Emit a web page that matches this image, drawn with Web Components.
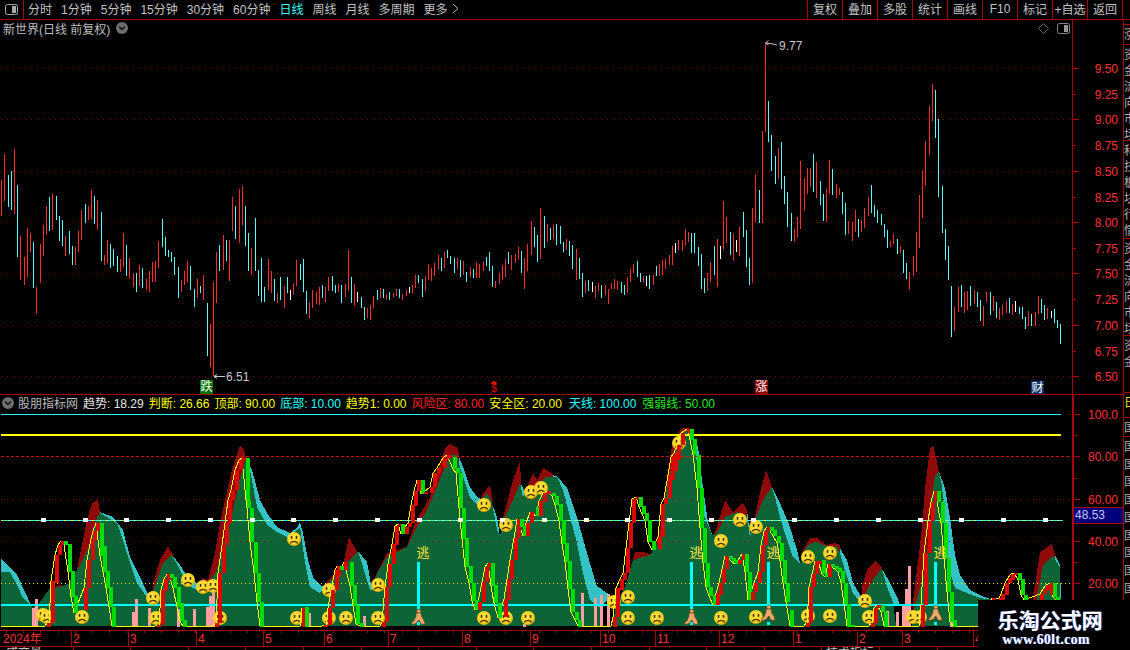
<!DOCTYPE html>
<html lang="zh">
<head>
<meta charset="utf-8">
<title>股朋指标网</title>
<style>
    html, body { margin: 0; background: #000; }
    body { width: 1130px; height: 650px; overflow: hidden; font: 12px "Liberation Sans", "Noto Sans CJK SC", sans-serif; color: #bdbdbd; }
</style>
</head>
<body>
<stock-app></stock-app>
<script>
const LINE = '#a80808';

// page x/y read off the reference, zoomed 3x: "zx,top,bottom,colour"
const CANDLE_RUNS = [
    { ox: 0, oy: 130, data: '4,150,258,r 13,72,212,r 25,135,232,c 34,123,240,c 43,57,252,r 52,165,380,c 61,318,450,r 73,381,465,r 82,294,441,r 91,309,366,r 100,336,474,c 109,471,552,r 121,342,459,r 130,285,378,r 139,228,315,r 148,201,303,c 157,192,300,r 169,198,270,c 178,258,333,c 187,270,348,c 196,318,378,r 208,303,372,c 217,348,405,c 226,351,405,r 235,303,366,r 244,240,330,r 256,222,279,c 265,228,270,r 274,180,267,r 283,198,282,c 292,210,297,r 304,246,393,c 313,375,405,r 322,330,399,r 331,342,414,c 340,357,408,c 352,378,426,c 361,387,426,r 370,309,411,r 379,345,438,c 388,384,447,r 400,429,471,r 409,429,486,c 418,405,468,r 427,414,474,c 439,447,480,r 448,423,486,r 457,396,456,r 466,393,456,r 475,333,414,r 487,267,351,c 496,321,378,c 505,360,381,c 514,366,396,c 523,381,435,c 535,411,504,c 544,450,486,r 553,423,465,r 562,393,456,r 571,408,480,c 583,477,531,c 592,447,504,r 601,468,489,c 610,435,510,r 622,519,678,c 631,582,711,r 640,456,738,r 649,366,519,r 658,345,423,c 670,315,420,r 679,330,393,c 688,330,453,r 697,201,303,r 706,228,327,c 718,177,339,r 727,168,285,r 736,228,348,c 745,309,423,c 754,354,435,r 766,264,423,c 775,420,498,c 784,384,516,c 793,471,516,c 805,387,480,r 814,423,489,r 823,447,513,c 832,489,519,r 841,441,510,c 853,468,534,r 862,441,489,c 871,480,510,w 880,459,492,r 889,390,468,r 901,402,450,c 910,387,486,c 919,483,552,c 928,516,564,r 937,480,534,r 949,486,522,r 958,471,525,r 967,465,504,c 976,471,516,r 985,441,483,r 997,438,483,c 1006,465,489,c 1015,462,486,r 1024,465,519,c 1036,462,501,r 1045,360,483,r 1054,441,519,c 1063,462,528,r 1072,486,516,w' },
    { ox: 360, oy: 190, data: '4,321,354,c 13,351,390,c 22,354,384,r 31,345,390,r 40,318,354,r 52,300,330,c 61,294,324,r 70,297,324,c 79,312,327,r 88,306,330,c 100,309,321,r 109,297,318,r 118,297,324,c 127,312,330,r 139,300,318,r 148,291,309,w 157,285,309,r 166,255,294,r 175,255,279,c 187,267,321,c 196,258,303,r 205,222,270,r 214,234,273,r 223,219,258,r 235,195,240,r 244,204,243,c 253,186,234,r 262,180,204,c 271,198,222,c 283,204,249,c 292,204,237,r 301,210,261,c 310,213,255,r 319,246,276,c 331,231,261,r 340,237,264,c 349,216,264,r 358,222,264,r 370,216,243,r 379,201,228,c 388,186,243,c 397,228,291,c 406,273,294,r 418,249,282,r 427,225,270,r 436,207,261,r 445,186,222,c 454,195,240,r 466,192,219,r 475,171,210,r 484,183,249,c 493,204,297,r 502,162,243,r 514,93,195,r 523,111,171,c 532,135,216,c 541,54,207,r 553,78,174,c 562,102,156,r 571,114,150,c 580,105,147,r 589,102,165,c 601,108,162,c 610,156,186,c 619,147,180,r 628,153,198,c 637,165,237,c 649,177,270,r 658,204,267,c 667,249,321,c 676,273,309,r 685,270,303,c 697,276,306,w 706,288,324,r 715,279,303,r 724,285,324,c 736,285,315,r 745,297,342,r 754,279,297,r 763,267,297,r 772,273,300,r 784,276,309,c 793,285,315,c 802,261,309,r 811,237,276,r 820,222,249,r 832,213,261,c 841,249,276,c 850,258,276,r 859,258,288,w 868,255,297,c 880,255,285,r 889,228,258,c 898,222,258,r 907,210,255,r 916,207,237,r 928,195,225,r 937,168,225,r 946,159,189,w 955,150,180,r 967,150,183,r 976,117,168,r 985,126,156,r 994,129,189,c 1003,129,189,c 1015,171,228,c 1024,192,297,c 1033,264,309,c 1042,249,303,r 1051,216,276,r 1063,168,255,c 1072,147,291,r' },
    { ox: 700, oy: 30, data: '61,648,687,w 70,513,660,r 79,561,639,r 91,606,675,c 100,612,693,r 109,630,666,w 118,591,678,r 130,546,621,c 139,600,711,c 148,684,765,c 157,534,759,r 166,432,576,r 178,480,579,c 187,303,579,r 196,40,306,r 205,213,336,c 214,315,423,c 226,378,462,c 235,354,447,r 244,336,477,c 253,438,522,c 262,486,591,c 274,549,633,c 283,597,636,r 292,561,624,r 301,393,597,r 313,444,543,r 322,414,492,r 331,414,471,r 340,372,486,c 349,396,504,r 361,453,525,c 370,492,573,c 379,477,576,r 388,390,492,r 397,417,495,c 409,462,504,r 418,474,495,r 427,486,552,c 436,519,615,c 445,573,612,r 457,576,633,r 466,540,606,r 475,567,621,c 484,570,606,r 493,534,594,r 505,501,558,r 514,465,549,c 523,525,561,c 532,540,579,c 544,552,585,c 553,582,621,c 562,600,654,c 571,633,651,r 580,612,642,r 592,627,672,c 601,648,669,r 610,660,729,c 619,699,747,c 628,726,780,r 640,678,738,r 649,606,726,r 658,495,654,r 667,420,564,r 676,333,468,r 688,228,375,r 697,162,273,r 706,180,324,c 715,267,501,c 727,468,609,c 736,597,690,c 745,648,750,c 754,768,921,c 763,831,903,r 775,771,846,r 784,765,831,c 793,786,849,r 802,783,840,r 811,768,828,c 823,780,822,r 832,786,831,c 841,810,873,c 850,828,888,r 859,786,816,r 871,786,855,c 880,798,843,r 889,816,864,c 898,834,870,r 907,825,855,r 919,813,849,r 928,804,849,c 937,822,855,r 946,813,846,w 958,831,852,c 967,831,867,c 976,861,897,c 985,843,888,r 994,852,888,c 1006,846,888,r 1015,798,852,r 1024,807,849,c 1033,825,870,c 1042,834,867,r 1054,843,864,w 1063,837,879,c 1072,870,894,c 1081,882,942,c' }
];

// stair steps of the trend line: "x,top,bottom,colour"
const TREND = '48,623,627,r 52,581,623,r 56,555,583,r 59,545,555,r 62,541,545,r 65,541,545,g 69,544,572,g 72,571,597,g 75,596,613,g 85,588,610,r 88,560,588,r 92,539,560,r 94,531,540,r 97,523,531,r 101,523,556,g 104,546,572,g 107,571,588,g 110,587,607,g 113,607,627,g 158,625,627,r 162,590,625,r 165,579,591,r 168,574,580,r 171,574,578,g 174,577,588,g 178,587,607,g 181,603,621,g 184,620,627,g 216,623,627,r 219,573,623,r 223,545,573,r 226,523,545,r 229,500,523,r 232,490,500,r 236,470,490,r 240,460,470,r 243,458,460,r 247,458,500,g 248,500,508,g 251,508,542,g 255,542,573,g 258,573,602,g 261,602,627,g 303,608,627,r 306,607,627,g 325,625,627,r 329,608,625,r 332,590,608,r 336,570,590,r 338,566,577,r 341,566,570,g 345,562,570,r 351,562,586,g 354,585,606,g 357,605,624,g 361,623,627,g 383,622,627,r 386,587,622,r 389,564,587,r 393,544,564,r 396,526,545,r 399,524,526,r 402,524,534,g 406,527,534,r 409,523,527,r 412,505,523,r 415,491,506,r 418,480,491,r 422,480,494,g 425,492,494,r 431,487,493,r 434,473,487,r 438,468,473,r 444,458,468,r 448,455,459,r 454,457,469,g 457,468,473,g 460,473,508,g 463,508,539,g 466,538,567,g 470,566,583,g 473,583,601,g 476,600,610,g 479,602,610,r 483,582,602,r 486,567,582,r 489,563,567,r 492,563,586,g 495,585,603,g 499,603,618,g 505,599,617,r 508,579,600,r 511,560,579,r 515,538,560,r 518,519,538,r 521,519,527,g 524,526,536,g 527,523,536,r 531,512,523,r 537,507,516,g 540,501,516,r 544,493,502,r 548,491,494,r 553,493,496,g 556,496,505,g 560,504,521,g 563,520,544,g 566,543,562,g 569,561,589,g 572,589,612,g 576,612,620,g 579,620,627,g 614,617,627,r 617,588,617,r 621,579,590,r 624,573,580,r 627,548,573,r 630,523,548,r 633,499,523,r 637,497,499,r 640,497,507,g 643,506,514,g 646,513,521,g 649,520,542,g 653,541,550,g 659,537,549,r 662,504,537,r 665,498,504,r 669,475,498,r 672,457,480,r 675,453,471,r 678,445,460,r 682,433,445,r 688,429,433,r 691,429,440,g 694,439,455,g 698,455,488,g 701,488,528,g 704,528,563,g 707,563,587,g 710,587,596,g 714,595,605,g 717,593,605,r 720,583,595,r 723,569,583,r 726,556,569,r 730,556,559,g 733,558,562,g 736,560,564,g 739,560,564,r 743,554,560,r 746,554,572,g 749,572,600,g 752,592,600,r 755,583,592,r 759,572,583,r 762,545,572,r 765,531,545,r 768,527,531,r 771,527,531,g 774,530,536,g 778,536,543,g 781,543,561,g 784,560,583,g 787,583,602,g 791,610,627,g 807,623,627,r 810,587,623,r 813,574,587,r 816,561,574,r 819,561,564,r 823,560,574,g 826,573,577,g 829,564,577,r 832,564,567,g 836,566,569,g 839,568,572,g 842,571,583,g 845,583,604,g 848,604,627,g 852,625,627,g 872,623,627,r 875,608,623,r 878,605,608,r 882,605,612,g 885,612,627,g 922,605,627,r 925,553,605,r 929,521,553,r 932,502,521,r 935,491,502,r 938,491,502,g 942,502,523,g 945,523,558,g 948,558,592,g 951,592,622,g 954,620,627,g 993,598,627,r 1000,598,600,r 1002,594,600,r 1006,583,595,r 1009,578,583,r 1012,574,580,r 1015,573,575,r 1019,573,580,g 1022,579,595,g 1025,595,600,g 1041,594,600,r 1044,589,594,r 1047,585,590,r 1051,583,595,r 1054,583,597,g 1057,597,600,g';

const GREEN_TOP = [[1,626],[1,572],[10,572],[17,585],[23,598],[32,607],[38,605],[50,588],[60,587],[70,583],[80,565],[90,545],[97,517],[100,513],[117,523],[123,540],[128,557],[137,583],[147,597],[152,594],[163,563],[172,555],[180,570],[188,585],[197,590],[207,585],[217,570],[222,550],[228,530],[233,510],[240,478],[246,458],[250,470],[257,507],[267,525],[277,532],[287,537],[297,530],[300,527],[305,563],[310,587],[320,593],[325,587],[337,573],[348,562],[358,551],[363,567],[370,590],[372,590],[377,573],[387,557],[407,547],[417,527],[427,510],[437,487],[445,467],[450,455],[457,455],[458,460],[463,477],[470,497],[477,505],[487,493],[492,502],[497,530],[500,536],[505,517],[513,500],[520,483],[523,497],[528,485],[533,487],[547,477],[557,477],[563,490],[570,517],[577,543],[583,573],[590,600],[597,606],[601,608],[603,626],[612,626],[616,607],[620,597],[625,587],[633,560],[650,555],[660,540],[667,487],[677,440],[685,430],[693,437],[698,470],[703,513],[712,535],[717,533],[725,517],[737,512],[748,523],[750,537],[755,520],[763,500],[772,487],[773,490],[780,517],[787,540],[793,557],[800,563],[805,550],[810,543],[817,542],[823,545],[830,547],[838,547],[847,577],[853,593],[860,602],[863,605],[867,590],[875,577],[882,568],[887,587],[893,602],[896,626],[912,626],[915,605],[925,570],[930,528],[932,495],[935,475],[939,472],[942,485],[945,528],[950,572],[955,588],[967,593],[980,598],[993,600],[998,612],[1033,612],[1037,598],[1043,565],[1053,555],[1060,568],[1061,626]];

const TEAL = [
    [[1,559],[8,565],[17,575],[25,592],[32,607]],
    [[100,512],[113,517],[123,530],[130,557],[140,577],[147,592],[150,596]],
    [[172,555],[180,565],[187,576],[197,583],[203,583]],
    [[246,458],[252,470],[260,500],[267,513],[277,527],[290,533],[297,528],[300,522],[303,533],[308,560],[313,577],[320,585],[325,587]],
    [[358,551],[367,562],[372,590]],
    [[457,452],[463,467],[470,487],[477,497],[483,500],[490,498],[497,517],[500,537]],
    [[520,482],[525,492],[528,485]],
    [[550,474],[558,477],[567,488],[577,517],[587,553],[597,587],[600,588],[607,593],[610,596],[600,609],[590,609],[550,609]],
    [[690,430],[698,447],[702,480],[708,523],[713,537]],
    [[743,505],[747,510],[750,533],[752,535]],
    [[772,487],[780,503],[790,527],[797,550],[800,563]],
    [[838,545],[847,560],[853,583],[860,595],[863,603]],
    [[883,570],[890,583],[897,597],[900,605],[895,605],[885,605]],
    [[939,472],[945,488],[950,518],[955,555],[960,575],[970,590],[980,595],[987,598],[993,600]],
    [[1055,555],[1060,565],[1061,600]]
];

const DARK_RED = [
    [[40,607],[47,597],[57,585],[67,586],[77,570],[87,520],[92,503],[98,500],[100,512]],
    [[153,583],[160,560],[168,546],[173,555]],
    [[202,578],[208,580],[215,553],[220,523],[225,500],[232,470],[240,445],[244,450],[246,458]],
    [[327,582],[343,565],[349,537],[357,552]],
    [[375,577],[387,553],[407,547],[415,523],[430,497],[438,470],[445,448],[450,444],[458,448],[459,455]],
    [[482,495],[490,485],[492,497]],
    [[503,518],[513,480],[520,462],[521,482]],
    [[528,485],[533,473],[537,480],[543,468],[550,472],[553,475]],
    [[628,577],[635,552],[643,552],[653,555],[662,520],[667,477],[673,440],[682,428],[690,428],[691,432]],
    [[715,533],[725,500],[733,512],[743,503],[747,510]],
    [[752,530],[760,493],[766,470],[772,487]],
    [[803,550],[810,538],[817,538],[822,542],[827,545],[835,543],[840,545]],
    [[862,587],[867,570],[875,561],[882,567]],
    [[913,602],[922,528],[925,488],[930,448],[933,445],[937,462],[939,473]],
    [[1033,598],[1040,552],[1052,544],[1055,555]]
];

const PINK = [[32,35,608],[35,38,599],[132,135,612],[135,138,599],[148,151,608],[177,180,609],[193,196,609],[206,209,607],[209,212,596],[212,215,583],[308,311,613],[363,366,616],[523,526,624],[581,584,593],[594,597,598],[600,603,595],[607,610,594],[886,889,611],[896,899,612],[902,905,604],[905,908,589],[908,911,566],[950,953,621]];
const FACES = [[43,615],[47,617],[82,617],[153,598],[156,618],[188,580],[203,587],[213,586],[220,618],[294,539],[297,618],[329,590],[329,618],[346,618],[378,585],[378,618],[484,505],[506,525],[484,618],[506,618],[528,618],[531,492],[541,488],[614,602],[628,597],[628,618],[657,618],[679,443],[721,541],[721,618],[740,520],[756,527],[756,617],[808,557],[808,616],[830,553],[830,616],[865,601],[869,617],[913,617],[920,617]];
const SIGNALS = [[418,617],[691,617],[768,613],[935,613]];

const pts = list => list.map(p => p.join(',')).join(' ');

class ToolBtn extends HTMLElement {
    constructor() {
        super();
        this.attachShadow({ mode: 'open' });
    }
    connectedCallback() {
        this.shadowRoot.innerHTML = `
            <style>
                :host { display: flex; align-items: center; justify-content: center; box-sizing: border-box; width: 35px; height: 19px; padding-bottom: 2px; border-left: 1px solid ${LINE}; color: #c4c4c4; white-space: nowrap; }
                :host(:last-child) { width: 36px; border-right: 1px solid ${LINE}; }
            </style>
            <slot></slot>`;
    }
}
customElements.define('tool-btn', ToolBtn);

class StockToolbar extends HTMLElement {
    constructor() {
        super();
        this.attachShadow({ mode: 'open' });
    }
    connectedCallback() {
        const periods = ['分时', '1分钟', '5分钟', '15分钟', '30分钟', '60分钟', '日线', '周线', '月线', '多周期', '更多'];
        this.shadowRoot.innerHTML = `
            <style>
                :host { display: flex; height: 19px; border-bottom: 1px solid ${LINE}; color: #c4c4c4; }
                .toggle { width: 23px; border-right: 1px solid ${LINE}; display: flex; align-items: center; justify-content: center; }
                .periods { display: flex; align-items: center; gap: 9px; padding: 0 0 2px 4px; }
                .on { color: #3ff; }
                .more { margin-left: -5px; }
                .btns { display: flex; margin-left: auto; padding-right: 7px; }
            </style>
            <div class="toggle">
                <svg width="13" height="11" viewBox="0 0 13 11"><rect x=".5" y=".5" width="12" height="10" rx="2" fill="none" stroke="#aaa"/><rect x="7" y="2" width="4" height="7" fill="#aaa"/></svg>
            </div>
            <div class="periods">
                ${periods.map(p => `<span class="${p === '日线' ? 'on' : ''}">${p}</span>`).join('')}
                <svg class="more" width="7" height="11" viewBox="0 0 7 11"><path d="M1 1l5 4.5L1 10" fill="none" stroke="#c4c4c4"/></svg>
            </div>
            <div class="btns"><slot></slot></div>`;
    }
}
customElements.define('stock-toolbar', StockToolbar);

class ChartPane extends HTMLElement {
    constructor() {
        super();
        this.attachShadow({ mode: 'open' });
    }
    connectedCallback() {
        this.shadowRoot.innerHTML = `
            <style>
                :host { display: grid; grid-template-columns: 1072px 51px; }
                .left { display: flex; flex-direction: column; min-width: 0; }
                .head { height: 18px; display: flex; align-items: center; }
            </style>
            <div class="left">
                <div class="head"><slot name="head"></slot></div>
                <slot name="plot"></slot>
            </div>
            <slot name="axis"></slot>`;
    }
}
customElements.define('chart-pane', ChartPane);

class ChevronDot extends HTMLElement {
    constructor() {
        super();
        this.attachShadow({ mode: 'open' });
    }
    connectedCallback() {
        this.shadowRoot.innerHTML = `
            <style>:host { display: inline-flex; }</style>
            <svg width="12" height="12" viewBox="0 0 12 12"><circle cx="6" cy="6" r="6" fill="#6e6e6e"/><path d="M3 4.5l3 3 3-3" fill="none" stroke="#111" stroke-width="1.4"/></svg>`;
    }
}
customElements.define('chevron-dot', ChevronDot);

class LegendItem extends HTMLElement {
    constructor() {
        super();
        this.attachShadow({ mode: 'open' });
    }
    connectedCallback() {
        const gap = this.getAttribute('gap') || 5;
        this.shadowRoot.innerHTML = `
            <style>:host { display: inline-block; white-space: nowrap; color: ${this.getAttribute('color')}; margin-right: ${gap}px; }</style>
            ${this.getAttribute('label')}: ${this.getAttribute('value')}`;
    }
}
customElements.define('legend-item', LegendItem);

class PriceAxis extends HTMLElement {
    constructor() {
        super();
        this.attachShadow({ mode: 'open' });
    }
    connectedCallback() {
        // ticks: "label|y|major", an empty label draws only the tick
        const top = Number(this.getAttribute('top'));
        const wide = this.getAttribute('wide') ? 2 : 1;
        const ticks = this.getAttribute('ticks').split(' ').map(t => t.split('|'));
        this.shadowRoot.innerHTML = `
            <style>
                :host { display: block; position: relative; box-sizing: border-box; border-left: ${wide}px solid ${LINE}; color: #ff3030; overflow: hidden; }
                i { position: absolute; left: 0; height: 1px; background: ${LINE}; }
                span { position: absolute; right: 5px; line-height: 14px; }
                ::slotted(*) { position: absolute; }
            </style>
            ${ticks.map(([label, y, major]) => `
                <i style="top:${y - top}px;width:${major ? 6 : 3}px"></i>
                ${label ? `<span style="top:${y - top - 6}px">${label}</span>` : ''}`).join('')}
            <slot></slot>`;
    }
}
customElements.define('price-axis', PriceAxis);

class LastValue extends HTMLElement {
    constructor() {
        super();
        this.attachShadow({ mode: 'open' });
    }
    connectedCallback() {
        this.shadowRoot.innerHTML = `
            <style>
                :host { display: block; left: 0; right: 0; top: 112px; height: 15px; line-height: 15px; padding-left: 1px; background: #00007c; border-top: 1px solid ${LINE}; border-bottom: 1px solid ${LINE}; color: #c6c6ff; }
            </style>
            <slot></slot>`;
    }
}
customElements.define('last-value', LastValue);

class CandlePlot extends HTMLElement {
    constructor() {
        super();
        this.attachShadow({ mode: 'open' });
    }
    connectedCallback() {
        const paths = { r: '', c: '', w: '' };
        CANDLE_RUNS.forEach(run => {
            run.data.split(' ').forEach(item => {
                const [zx, top, bottom, colour] = item.split(',');
                const x = Math.floor(zx / 3) + run.ox + .5;
                paths[colour] += `M${x} ${Math.round(top / 3) + run.oy}V${Math.round(bottom / 3) + run.oy}`;
            });
        });
        const grid = [68, 119, 171, 222, 273, 325, 376];
        this.shadowRoot.innerHTML = `
            <style>
                :host { display: block; height: 356px; }
                svg { display: block; }
                text { font: 12px "Liberation Sans", "Noto Sans CJK SC", sans-serif; }
            </style>
            <svg width="1072" height="356" viewBox="0 38 1072 356" shape-rendering="crispEdges">
                ${grid.map(y => `<line x1="1" x2="1072" y1="${y + .5}" y2="${y + .5}" stroke="#8c0000" stroke-dasharray="1 5"/>`).join('')}
                <path d="${paths.r}" stroke="#ff2c2c" fill="none"/>
                <path d="${paths.c}" stroke="#54ffff" fill="none"/>
                <path d="${paths.w}" stroke="#fff" fill="none"/>
                <g stroke="#c8c8c8" fill="none" shape-rendering="auto">
                    <path d="M765.5 43l3-2.5M765.5 43l3 2M766 43l6 .8 5 1.2"/>
                    <path d="M214 376.5h11M214 376.5l3-2M214 376.5l3 2"/>
                </g>
                <text x="779" y="50" fill="#c8c8c8">9.77</text>
                <text x="226" y="381" fill="#c8c8c8">6.51</text>
                <rect x="200" y="380" width="13" height="14" fill="#007400"/>
                <text x="206.5" y="391" fill="#fff" text-anchor="middle">跌</text>
                <path d="M491 384l3-4 3 4z" fill="#f00000"/>
                <text x="494" y="392" fill="#f00000" text-anchor="middle" font-weight="bold" style="font-size:10px">$</text>
                <rect x="755" y="380" width="13" height="14" fill="#8a0808"/>
                <text x="761.5" y="391" fill="#fff" text-anchor="middle">涨</text>
                <rect x="1031" y="381" width="13" height="13" fill="#0c3468"/>
                <text x="1037.5" y="392" fill="#fff" text-anchor="middle">财</text>
            </svg>`;
    }
}
customElements.define('candle-plot', CandlePlot);

class IndicatorPlot extends HTMLElement {
    constructor() {
        super();
        this.attachShadow({ mode: 'open' });
    }
    connectedCallback() {
        const bars = TREND.split(' ').map(s => s.split(',')).map(([x, t, b, c]) => ({ x: +x, t: +t, b: +b, c }));
        // the thin line sits on the stairs' left edge and only peeks out between steps
        const yellow = [[1, 626]];
        bars.forEach(bar => {
            if (bar.c === 'r') {
                if (bar.b >= 623) yellow.push([bar.x - 3, 626]);
                yellow.push([bar.x - 1, bar.t]);
            } else {
                yellow.push([bar.x - 1, Math.min(bar.b, 626)]);
            }
        });
        const squares = [];
        for (let i = 0; i < 25; i++) squares.push(Math.round(43 + i * 41.74));
        const patch = (list, fill) => list.map(p => {
            const closed = p.some((q, i) => i && q[0] < p[i - 1][0]);
            const shape = closed ? p : [...p, [p[p.length - 1][0], 626], [p[0][0], 626]];
            return `<polygon points="${pts(shape)}" fill="${fill}"/>`;
        }).join('');
        this.shadowRoot.innerHTML = `
            <style>
                :host { display: block; height: 217px; }
                svg { display: block; }
                text { font: 13px "Liberation Sans", "Noto Sans CJK SC", sans-serif; }
            </style>
            <svg width="1072" height="217" viewBox="0 413 1072 217" shape-rendering="crispEdges">
                <defs>
                    <radialGradient id="fg" cx=".45" cy=".4" r=".65"><stop offset="0" stop-color="#ffe648"/><stop offset=".7" stop-color="#f8d020"/><stop offset="1" stop-color="#c89408"/></radialGradient>
                    <g id="sad" shape-rendering="auto">
                        <circle r="7" fill="url(#fg)"/>
                        <rect x="-3.2" y="-3" width="1.5" height="2.8" fill="#3a2600"/>
                        <rect x="1.7" y="-3" width="1.5" height="2.8" fill="#3a2600"/>
                        <path d="M-3.8 4.2Q0 .6 3.8 4.2" fill="none" stroke="#4a3000" stroke-width="1.3"/>
                    </g>
                    <g id="runner" shape-rendering="auto">
                        <circle cx=".3" cy="-5.8" r="2" fill="#e8a868" stroke="#6d3b1a" stroke-width=".5"/>
                        <path d="M-2.4-4L2.6-4L3.2-.5L5.6 3.6L6.8 7.2L2.4 7.2L.3 3L-2.4 6.4L-6.4 7.8L-6.8 5.8L-4.4 3.4L-2.6-.8Z" fill="#e8a868" stroke="#6d3b1a" stroke-width=".7"/>
                    </g>
                </defs>
                ${patch(TEAL, '#33c2c6')}
                ${patch(DARK_RED, '#8f0a0a')}
                <polygon points="${pts(GREEN_TOP)}" fill="#0b6536"/>
                ${PINK.map(([a, b, y]) => `<rect x="${a}" y="${y}" width="${b - a}" height="${627 - y}" fill="#ff9ea2"/>`).join('')}
                <line x1="1" x2="1061" y1="414.5" y2="414.5" stroke="#2ff"/>
                <rect x="1" y="434" width="1060" height="2" fill="#ff0"/>
                <line x1="1" x2="1071" y1="456.5" y2="456.5" stroke="#d81010" stroke-dasharray="3 2"/>
                <line x1="1" x2="1071" y1="499.5" y2="499.5" stroke="#9c0000" stroke-dasharray="1 5"/>
                <line x1="1" x2="1071" y1="541.5" y2="541.5" stroke="#9c0000" stroke-dasharray="1 5"/>
                <line x1="1" x2="1063" y1="520.5" y2="520.5" stroke="#2ff"/>
                <line x1="1" x2="1063" y1="520.5" y2="520.5" stroke="#ff0" stroke-dasharray="2 5"/>
                <line x1="1" x2="1071" y1="583.5" y2="583.5" stroke="#ff0" stroke-dasharray="1 3"/>
                <rect x="1" y="604" width="1060" height="2" fill="#0ff"/>
                ${SIGNALS.map(([x, y]) => `<rect x="${x - 1}" y="562" width="3" height="${y - 570}" fill="#0ff"/><rect x="${x - 1}" y="622" width="3" height="3" fill="#0ff"/>`).join('')}
                ${FACES.map(([x, y]) => `<use href="#sad" x="${x}" y="${y}"/>`).join('')}
                <polyline points="${pts(yellow)}" fill="none" stroke="#ff0"/>
                ${bars.map(b => `<rect x="${b.x - 1}" y="${b.t}" width="4" height="${b.b - b.t}" fill="${b.c === 'r' ? '#dc0808' : '#00dc00'}"/>`).join('')}
                ${squares.map(x => `<rect x="${x - 2}" y="518" width="5" height="4" fill="#fff"/>`).join('')}
                ${SIGNALS.map(([x, y]) => `<use href="#runner" x="${x + .5}" y="${y}"/>`).join('')}
                ${SIGNALS.map(([x]) => `<text x="${x + 5}" y="557" fill="#ffe040" text-anchor="middle">逃</text>`).join('')}
            </svg>`;
    }
}
customElements.define('indicator-plot', IndicatorPlot);

class TimeAxis extends HTMLElement {
    constructor() {
        super();
        this.attachShadow({ mode: 'open' });
    }
    connectedCallback() {
        const months = [[1,'2024年'],[71,'2'],[128,'3'],[196,'4'],[263,'5'],[324,'6'],[388,'7'],[462,'8'],[530,'9'],[600,'10'],[655,'11'],[719,'12'],[793,'1'],[857,'2'],[902,'3'],[973,'4']];
        let minor = '';
        for (let x = 6; x < 1072; x += 17.2) minor += `M${Math.round(x) + .5} 630V633`;
        let lower = '';
        for (let x = 15; x < 1072; x += 57.6) lower += `M${Math.round(x) + .5} 647V650`;
        this.shadowRoot.innerHTML = `
            <style>
                :host { display: block; position: relative; height: 20px; grid-column: 1 / -1; }
                svg { position: absolute; left: 0; top: 0; }
                .labels { display: block; height: 16px; position: relative; }
                span { position: absolute; top: 3px; line-height: 13px; color: #ff3030; }
                .tail { position: absolute; left: 0; right: 0; top: 17px; height: 3px; overflow: hidden; color: #c4c4c4; line-height: 12px; white-space: nowrap; }
                .tail b { position: absolute; top: 0; font-weight: normal; }
            </style>
            <svg width="1123" height="20" viewBox="0 630 1123 20" shape-rendering="crispEdges">
                <path d="M0 630.5H1123M0 646.5H1123" stroke="${LINE}"/>
                <path d="${minor}${lower}" stroke="${LINE}"/>
                <path d="${months.slice(1).map(m => `M${m[0] + .5} 630V646`).join('')}" stroke="${LINE}"/>
            </svg>
            <div class="labels">${months.map(m => `<span style="left:${m[0] + 2}px">${m[1]}</span>`).join('')}</div>
            <div class="tail"><b style="left:6px">成交量</b><b style="left:826px">技术指标</b></div>`;
    }
}
customElements.define('time-axis', TimeAxis);

class SideStrip extends HTMLElement {
    constructor() {
        super();
        this.attachShadow({ mode: 'open' });
    }
    connectedCallback() {
        const rows = [[5, ''], [20, '涨'], [96, '资金流向市场'], [98, '科技板块行情'], [97, '资金流向市场'], [57, '资金'], [25, ''], [19, '国'], [193, '国国国国国国国国国国国']];
        this.shadowRoot.innerHTML = `
            <style>
                :host { display: block; width: 7px; box-sizing: border-box; border-left: 1px solid ${LINE}; overflow: hidden; color: #b0b0b0; }
                div { box-sizing: border-box; border-bottom: 1px solid ${LINE}; overflow: hidden; width: 14px; line-height: 16px; padding-top: 2px; }
                .last { line-height: 17.7px; border: 0; }
                .gold { color: #e0e030; }
            </style>
            ${rows.map((r, i) => `<div class="${i === 8 ? 'last' : ''}${i === 6 ? ' gold' : ''}" style="height:${r[0]}px">${r[1] || (i === 6 ? '日' : '')}</div>`).join('')}`;
    }
}
customElements.define('side-strip', SideStrip);

class WaterMark extends HTMLElement {
    constructor() {
        super();
        this.attachShadow({ mode: 'open' });
    }
    connectedCallback() {
        this.shadowRoot.innerHTML = `
            <style>
                :host { position: absolute; left: 978px; top: 600px; width: 152px; height: 50px; background: #000; display: flex; flex-direction: column; align-items: center; color: #fff; padding-right: 8px; box-sizing: border-box; }
                .cn { font: bold 21px/24px "Noto Sans CJK SC", sans-serif; margin-top: 7px; text-shadow: 1px 0 0 #3050d0; }
                .en { font: bold 14px/16px "Liberation Serif", serif; letter-spacing: .3px; margin: 1px 8px 0 0; text-shadow: 1px 0 0 #3050d0; }
            </style>
            <div class="cn">乐淘公式网</div>
            <div class="en">www.60lt.com</div>`;
    }
}
customElements.define('water-mark', WaterMark);

class StockApp extends HTMLElement {
    constructor() {
        super();
        this.attachShadow({ mode: 'open' });
    }
    connectedCallback() {
        const priceTicks = '9.50|68|1 9.25|94 9.00|119|1 8.75|145 8.50|171|1 8.25|197 8.00|222|1 7.75|248 7.50|273|1 7.25|299 7.00|325|1 6.75|351 6.50|376|1';
        const indTicks = '100.0|414|1 |435 80.00|456|1 |478 60.00|499|1 40.00|541|1 |562 20.00|583|1';
        this.shadowRoot.innerHTML = `
            <style>
                :host { display: flex; flex-direction: column; position: relative; width: 1130px; height: 650px; }
                .body { display: flex; flex: 1; min-height: 0; }
                .charts { width: 1123px; display: flex; flex-direction: column; }
                .main { height: 375px; border-bottom: 1px solid ${LINE}; box-sizing: border-box; }
                .ind { height: 235px; }
                .title { display: flex; align-items: center; gap: 6px; padding: 0 0 2px 3px; width: 100%; white-space: nowrap; }
                .tools { margin-left: auto; display: flex; align-items: center; gap: 8px; padding-right: 2px; }
                .legend { display: flex; align-items: center; padding: 0 0 3px 2px; white-space: nowrap; width: 100%; }
                .legend span { margin: 0 5px 0 4px; }
            </style>
            <stock-toolbar>
                <tool-btn>复权</tool-btn><tool-btn>叠加</tool-btn><tool-btn>多股</tool-btn><tool-btn>统计</tool-btn><tool-btn>画线</tool-btn><tool-btn>F10</tool-btn><tool-btn>标记</tool-btn><tool-btn>+自选</tool-btn><tool-btn>返回</tool-btn>
            </stock-toolbar>
            <div class="body">
                <div class="charts">
                    <chart-pane class="main">
                        <div slot="head" class="title">
                            <span>新世界(日线 前复权)</span><chevron-dot></chevron-dot>
                            <div class="tools">
                                <svg width="11" height="11" viewBox="0 0 11 11"><path d="M5.5.5l5 5-5 5-5-5z" fill="none" stroke="#666"/></svg>
                                <svg width="13" height="11" viewBox="0 0 13 11"><rect x=".5" y=".5" width="12" height="10" rx="2" fill="none" stroke="#888"/><rect x="7" y="2" width="4" height="7" fill="#999"/></svg>
                            </div>
                        </div>
                        <candle-plot slot="plot"></candle-plot>
                        <price-axis slot="axis" top="20" ticks="${priceTicks}"></price-axis>
                    </chart-pane>
                    <chart-pane class="ind">
                        <div slot="head" class="legend">
                            <chevron-dot></chevron-dot><span>股朋指标网</span>
                            <legend-item color="#e8e8e8" label="趋势" value="18.29"></legend-item>
                            <legend-item color="#ff0" label="判断" value="26.66"></legend-item>
                            <legend-item color="#ff0" label="顶部" value="90.00"></legend-item>
                            <legend-item color="#2ff" label="底部" value="10.00"></legend-item>
                            <legend-item color="#ff0" label="趋势1" value="0.00"></legend-item>
                            <legend-item color="#f22" label="风险区" value="80.00"></legend-item>
                            <legend-item color="#ff0" label="安全区" value="20.00" gap="7"></legend-item>
                            <legend-item color="#2ff" label="天线" value="100.00" gap="6"></legend-item>
                            <legend-item color="#2e2" label="强弱线" value="50.00"></legend-item>
                        </div>
                        <indicator-plot slot="plot"></indicator-plot>
                        <price-axis slot="axis" top="395" wide="1" ticks="${indTicks}"><last-value>48.53</last-value></price-axis>
                    </chart-pane>
                    <time-axis></time-axis>
                </div>
                <side-strip></side-strip>
            </div>
            <water-mark></water-mark>`;
    }
}
customElements.define('stock-app', StockApp);
</script>
</body>
</html>
